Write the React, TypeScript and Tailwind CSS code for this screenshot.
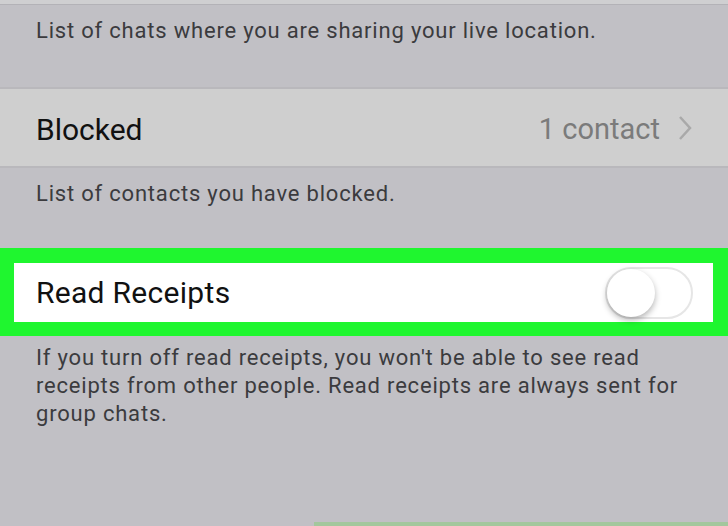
export default function App() {
  const font = { fontFamily: 'Roboto, "Liberation Sans", sans-serif' }
  return (
    <div className="w-[728px] h-[526px] overflow-hidden bg-[#c1c0c5] flex flex-col" style={font}>
      <div className="h-[5px] bg-[#cfcfd1] border-b border-[#b3b2b7]" />
      <div className="h-[82px] pl-[36px] pt-[12px] text-[22px] leading-[28px] tracking-[0.8px] text-[#3b3b3e]">
        List of chats where you are sharing your live location.
      </div>
      <div className="h-[81px] bg-[#cfcfcf] border-y-2 border-[#b9b8bc] flex items-center pl-[36px] pr-[36px]">
        <span className="text-[30px] pt-[4px] text-[#111]">Blocked</span>
        <span className="ml-auto text-[29px] pt-[4px] text-[#7b7b7b]">1 contact</span>
        <svg width="14" height="26" viewBox="0 0 14 26" className="ml-[18px]">
          <polyline points="2,2 12,13 2,24" fill="none" stroke="#a9a9a9" strokeWidth="2.5" />
        </svg>
      </div>
      <div className="h-[80px] pl-[36px] pt-[12px] text-[22px] leading-[28px] tracking-[0.8px] text-[#3b3b3e]">
        List of contacts you have blocked.
      </div>
      <div className="h-[88px] bg-[#1ff62f] pt-[15px] pb-[14px] pl-[14px] pr-[15px]">
        <div className="h-[59px] bg-white flex items-center pl-[22px] pr-[20px]">
          <span className="text-[30px] tracking-[0.3px] text-[#111]">Read Receipts</span>
          <div className="ml-auto w-[88px] h-[52px] rounded-full border-2 border-[#e6e6e6] bg-white relative">
            <div className="absolute left-0 top-[0px] w-[48px] h-[48px] rounded-full bg-white shadow-[0_3px_6px_rgba(0,0,0,0.3)]" />
          </div>
        </div>
      </div>
      <div className="flex-1 flex flex-col">
        <p className="pl-[36px] pr-[36px] pt-[8px] text-[22px] leading-[28px] tracking-[0.8px] text-[#3b3b3e]">
          If you turn off read receipts, you won't be able to see read receipts from other people. Read receipts are always sent for group chats.
        </p>
        <div className="mt-auto ml-[314px] h-[4px] bg-[#a3c79d]" />
      </div>
    </div>
  )
}
